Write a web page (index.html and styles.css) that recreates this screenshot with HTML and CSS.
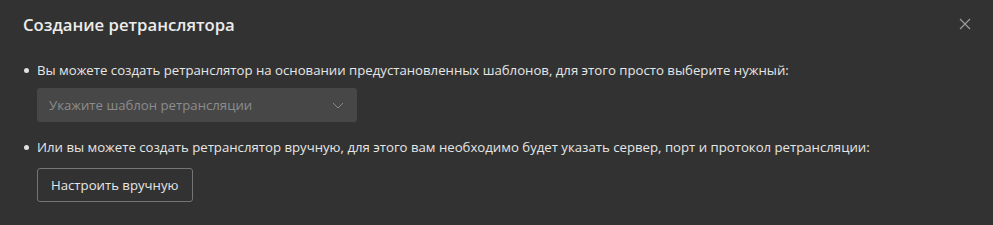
FILE: index.html
```html
<!DOCTYPE html>
<html lang="ru">
<head>
    <meta charset="UTF-8">
    <title>Создание ретранслятора</title>
    <link rel="stylesheet" href="styles.css">
</head>
<body>
    <div class="dialog">
        <div class="dialog-header">
            <h1>Создание ретранслятора</h1>
            <button class="close-btn" title="Закрыть">
                <svg width="12" height="12" viewBox="0 0 12 12"><path d="M1 1L11 11M11 1L1 11" stroke="#9a9a9a" stroke-width="1.2"/></svg>
            </button>
        </div>
        <ul class="options">
            <li>
                <p>Вы можете создать ретранслятор на основании предустановленных шаблонов, для этого просто выберите нужный:</p>
                <div class="select">
                    <span>Укажите шаблон ретрансляции</span>
                    <svg width="12" height="7" viewBox="0 0 12 7"><path d="M1 1L6 6L11 1" fill="none" stroke="#8a8a8a" stroke-width="1"/></svg>
                </div>
            </li>
            <li>
                <p class="manual-text">Или вы можете создать ретранслятор вручную, для этого вам необходимо будет указать сервер, порт и протокол ретрансляции:</p>
                <button class="btn">Настроить вручную</button>
            </li>
        </ul>
    </div>
</body>
</html>
```

FILE: styles.css
```css
body { margin: 0; background: #323232; color: #e6e6e6; font-family: "Open Sans", "Noto Sans", sans-serif; }
.dialog { padding: 12px 22px 0 23px; }
.dialog-header { display: flex; justify-content: space-between; align-items: center; height: 24px; }
.dialog-header h1 { margin: 0; font-size: 16.7px; font-weight: 600; color: #ececec; }
.close-btn { background: none; border: 0; padding: 0; display: flex; cursor: pointer; margin-right: 0; }
.options { list-style: none; margin: 24px 0 0; padding: 0; }
.options li { position: relative; padding-left: 14px; margin-bottom: 15px; }
.options li::before { content: ""; position: absolute; left: 1px; top: 8px; width: 5px; height: 5px; border-radius: 50%; background: #e0e0e0; }
.options p { margin: 0 0 8px; font-size: 13.2px; line-height: 20px; }
.options p.manual-text { margin-bottom: 11px; }
.select { width: 320px; height: 34px; box-sizing: border-box; background: #474747; border-radius: 3px; display: flex; align-items: center; justify-content: space-between; padding: 0 13px 0 12px; color: #8c8c8c; font-size: 13.2px; }
.btn { height: 34px; padding: 0 13px; background: #323232; border: 1px solid #757575; border-radius: 3px; color: #e6e6e6; font-family: inherit; font-size: 13.2px; cursor: pointer; }
```
